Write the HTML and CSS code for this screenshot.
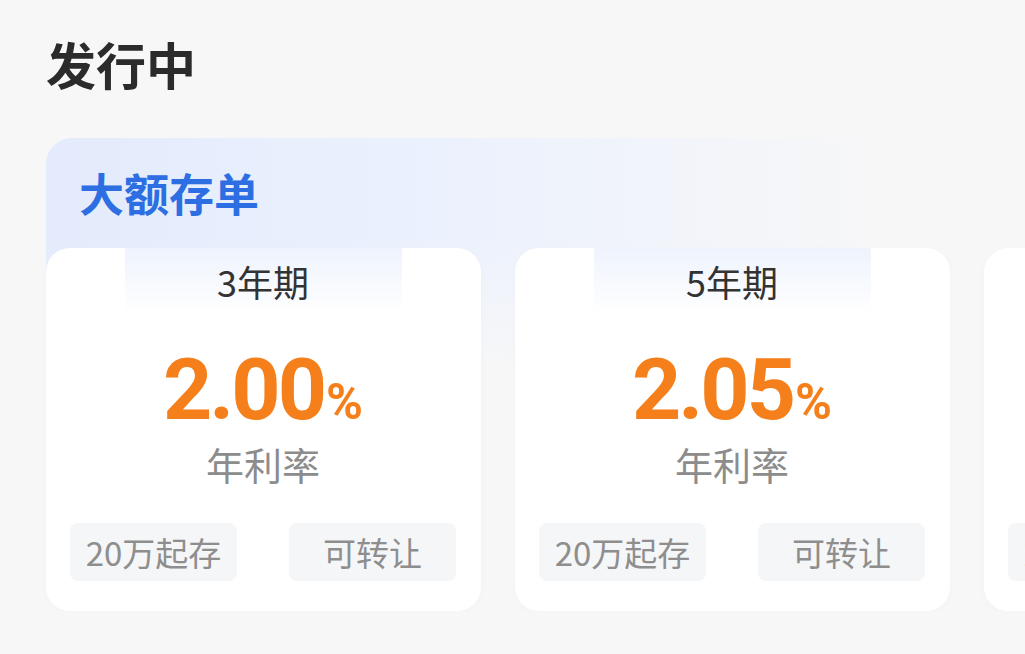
FILE: index.html
```html
<!DOCTYPE html>
<html lang="zh">
<head>
  <meta charset="UTF-8">
  <meta name="viewport" content="width=device-width, initial-scale=1.0">
  <title>发行中</title>
  <link rel="stylesheet" href="styles.css">
</head>
<body>
  <div class="page">
    <div class="title">发行中</div>

    <div class="section">
      <div class="section-head">大额存单</div>

      <div class="cards">
        <div class="card">
          <div class="term">3年期</div>
          <div class="rate">2.00<span class="pct">%</span></div>
          <div class="rate-label">年利率</div>
          <div class="tags">
            <span class="tag">20万起存</span>
            <span class="tag">可转让</span>
          </div>
        </div>

        <div class="card">
          <div class="term">5年期</div>
          <div class="rate">2.05<span class="pct">%</span></div>
          <div class="rate-label">年利率</div>
          <div class="tags">
            <span class="tag">20万起存</span>
            <span class="tag">可转让</span>
          </div>
        </div>

        <div class="card">
          <div class="term">3年期</div>
          <div class="rate">2.00<span class="pct">%</span></div>
          <div class="rate-label">年利率</div>
          <div class="tags">
            <span class="tag">20万起存</span>
            <span class="tag">可转让</span>
          </div>
        </div>
      </div>
    </div>
  </div>
</body>
</html>
```

FILE: styles.css
```css
body {
  font-family: "Noto Sans CJK SC", "Noto Sans", sans-serif;
  background: #f7f7f8;
  margin: 0;
  overflow: hidden;
}
.page {
  padding: 38px 0 0 46px;
}
.title {
  font-size: 50px;
  line-height: 50px;
  font-weight: bold;
  color: #2b2b2b;
  margin-bottom: 50px;
}
.section {
  border-top-left-radius: 26px;
  background:
    linear-gradient(180deg, rgba(247,247,248,0) 100px, #f7f7f8 230px),
    linear-gradient(90deg, #e3ebfc 0%, #ebf1fd 40%, #f7f7f8 85%);
}
.section-head {
  font-size: 45px;
  line-height: 45px;
  font-weight: bold;
  color: #2d6fe3;
  padding: 32px 33px 33px;
}
.cards {
  display: flex;
  gap: 34px;
}
.card {
  flex: 0 0 435px;
  background: #fff;
  border-radius: 24px;
  padding: 0 25px 30px 24px;
  box-sizing: border-box;
  text-align: center;
  box-shadow: 0 2px 10px rgba(0,0,0,0.02);
}
.term {
  width: 277px;
  height: 66px;
  line-height: 66px;
  margin: 0 auto;
  font-size: 36px;
  color: #333;
  background: linear-gradient(180deg, #eef3fd 0%, #ffffff 100%);
}
.rate {
  margin-top: 41px;
  font-family: Roboto, "Noto Sans", sans-serif;
  font-size: 86px;
  line-height: 70px;
  font-weight: bold;
  color: #f57f1a;
  letter-spacing: -3px;
}
.pct {
  font-size: 50px;
  letter-spacing: 0;
  margin-left: 2px;
}
.rate-label {
  margin-top: 8px;
  font-size: 38px;
  line-height: 38px;
  color: #8c8c8c;
}
.tags {
  display: flex;
  justify-content: space-between;
  margin-top: 40px;
}
.tag {
  width: 167px;
  height: 58px;
  line-height: 58px;
  border-radius: 8px;
  background: #f5f6f8;
  font-size: 33px;
  color: #8e8e8e;
}
```
